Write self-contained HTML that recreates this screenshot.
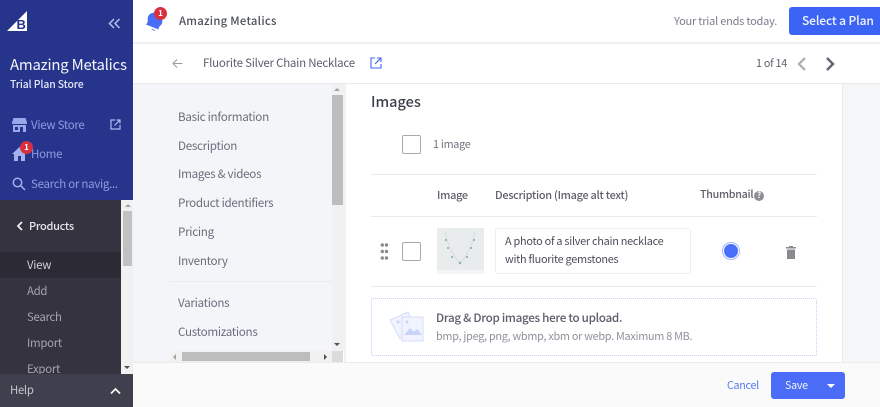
<!DOCTYPE html>
<html><head><meta charset="utf-8"><style>
html,body{margin:0;padding:0;width:880px;height:407px;overflow:hidden;background:#fff}
body{font-family:"Noto Sans CJK SC","Liberation Sans",sans-serif;position:relative}
.a{position:absolute}
.t{position:absolute;white-space:nowrap;line-height:16px;font-size:12px}
.n{letter-spacing:-.025em}
.nav{color:#6b6e7d;font-size:11.650px;left:178px;letter-spacing:-.025em}
.sb{color:#8f9be0;font-size:11.500px;left:31px;letter-spacing:-.025em}
.dk{color:#a6a5ad;font-size:11.400px;left:27px;letter-spacing:-.025em}
</style></head><body>
<!-- left sidebar -->
<div class="a" style="left:0;top:0;width:133px;height:200px;background:#27348b"></div>
<svg class="a" style="left:7px;top:10px" width="22" height="22" viewBox="0 0 22 22"><path d="M0 21L20 1V21Z" fill="#fff"/><text x="9.500" y="19" font-size="13" font-weight="700" fill="#27348b" font-family="Liberation Sans">B</text></svg>
<svg class="a" style="left:108px;top:17px" width="13" height="13" viewBox="0 0 13 13" fill="none" stroke="#b5bdf0" stroke-width="1.500"><path d="M6 2L1.500 6.500L6 11M11.500 2L7 6.500L11.500 11"/></svg>
<div class="t" style="left:10px;top:55px;font-size:14.900px;line-height:20px;color:#f2f3fb;letter-spacing:-.2px">Amazing Metalics</div>
<div class="t" style="left:10px;top:76px;font-size:10.400px;font-weight:500;color:#e3e6f8;letter-spacing:-.12px">Trial Plan Store</div>
<svg class="a" style="left:12px;top:118px" width="15" height="14" viewBox="0 0 15 14" fill="#9ba7ec"><path d="M1.500 0H13.500L15 4.500V6H0V4.500ZM1 7H14V14H11V9H8V14H1ZM3 9V12H6V9Z" fill-rule="evenodd"/></svg>
<div class="t sb" style="top:117px">View Store</div>
<svg class="a" style="left:110px;top:119px" width="11" height="11" viewBox="0 0 11 11" fill="none" stroke="#b0b9ee" stroke-width="1.200"><path d="M5 1H1V10H10V6M6.500 1H10V4.500M10 1L4.500 6.500"/></svg>
<svg class="a" style="left:12px;top:147px" width="15" height="14" viewBox="0 0 15 14" fill="#a5b0ef"><path d="M7.500 0L15 7H13V14H9V9H6V14H2V7H0Z"/></svg>
<div class="a" style="left:20px;top:141px;width:13px;height:13px;border-radius:50%;background:#d9303f;color:#fff;font-size:8px;line-height:13px;text-align:center;font-weight:700">1</div>
<div class="t sb" style="top:146px">Home</div>
<svg class="a" style="left:12px;top:177px" width="14" height="14" viewBox="0 0 14 14" fill="none" stroke="#a5b0ef" stroke-width="1.500"><circle cx="5.500" cy="5.500" r="4.200"/><path d="M8.500 8.500L13 13"/></svg>
<div class="t sb" style="top:176px">Search or navig...</div>
<div class="a" style="left:0;top:200px;width:121px;height:174px;background:#34333f"></div>
<div class="a" style="left:0;top:252px;width:121px;height:26px;background:#2b2a35"></div>
<svg class="a" style="left:16px;top:221px" width="8" height="10" viewBox="0 0 8 10" fill="none" stroke="#eee" stroke-width="1.800"><path d="M6 1L2 5L6 9"/></svg>
<div class="t n" style="left:29px;top:218px;font-size:11px;font-weight:500;color:#e6e6ea">Products</div>
<div class="t dk" style="top:257px;color:#cfcfd4">View</div>
<div class="t dk" style="top:283px">Add</div>
<div class="t dk" style="top:309px">Search</div>
<div class="t dk" style="top:335px">Import</div>
<div class="t dk" style="top:361px">Export</div>
<div class="a" style="left:121px;top:200px;width:12px;height:174px;background:#f1f1f1"></div>
<div class="a" style="left:123px;top:211px;width:9px;height:55px;background:#c1c1c1"></div>
<div class="a" style="left:125px;top:204px;width:0;height:0;border:3px solid transparent;border-top:0;border-bottom:3px solid #a3a3a3"></div>
<div class="a" style="left:124px;top:366px;width:0;height:0;border:3px solid transparent;border-bottom:0;border-top:3px solid #505050"></div>
<div class="a" style="left:0;top:374px;width:133px;height:33px;background:#403f4d"></div>
<div class="t n" style="left:10px;top:382px;font-size:11.300px;color:#c4c4cb">Help</div>
<svg class="a" style="left:110px;top:387px" width="11" height="8" viewBox="0 0 11 8" fill="none" stroke="#f2f2f2" stroke-width="1.800"><path d="M1 6.500L5.500 2L10 6.500"/></svg>
<!-- top bar -->
<div class="a" style="left:133px;top:42px;width:747px;height:2px;background:#efeff1"></div>
<svg class="a" style="left:145px;top:11px" width="20" height="21" viewBox="0 0 20 21" fill="#4a6cf7"><path d="M7 2C3.500 3 2.500 6 2.800 9C3 11 2 12.500 1 13.500L13.500 18.500C13.500 17 14 15.500 15.500 14.500C18 12.500 18 8.500 15.500 5C13.500 2.500 10 1 7 2Z"/><path d="M6.500 17.500A3 3 0 0 0 10.500 19.500Z"/></svg>
<div class="a" style="left:154px;top:7px;width:13px;height:13px;border-radius:50%;background:#d9303f;color:#fff;font-size:8px;line-height:13px;text-align:center;font-weight:700">1</div>
<div class="t" style="left:179px;top:13px;font-size:11.300px;font-weight:500;color:#4c4f5c;letter-spacing:.27px">Amazing Metalics</div>
<div class="t" style="left:674px;top:13px;font-size:11px;color:#7a7d8e;letter-spacing:-.22px">Your trial ends today.</div>
<div class="a" style="left:789px;top:7px;width:100px;height:28px;border-radius:3px;background:#3c64f4"></div>
<div class="t" style="left:802px;top:13px;font-size:12px;font-weight:500;color:#f4f6ff;letter-spacing:-.12px">Select a Plan</div>
<!-- sub header -->
<svg class="a" style="left:172px;top:58px" width="11" height="11" viewBox="0 0 11 11" fill="none" stroke="#9a9ca6" stroke-width="1.100"><path d="M10.500 5.500H1M5 1.500L1 5.500L5 9.500"/></svg>
<div class="t" style="left:203px;top:55px;font-size:11.500px;color:#5c5f6e;letter-spacing:-.24px">Fluorite Silver Chain Necklace</div>
<svg class="a" style="left:370px;top:57px" width="12" height="12" viewBox="0 0 12 12" fill="none" stroke="#3c64f4" stroke-width="1.100"><path d="M5 1H1V11H11V7M7 1H11V5M11 1L5 7"/></svg>
<div class="t n" style="left:756px;top:55px;font-size:10.800px;color:#5e606c">1 of 14</div>
<svg class="a" style="left:796px;top:57px" width="11" height="14" viewBox="0 0 11 14" fill="none" stroke="#b0b1b6" stroke-width="2.400"><path d="M9 1L3 7L9 13"/></svg>
<svg class="a" style="left:825px;top:57px" width="11" height="14" viewBox="0 0 11 14" fill="none" stroke="#63646f" stroke-width="2.400"><path d="M2 1L8 7L2 13"/></svg>
<div class="a" style="left:133px;top:83px;width:747px;height:1px;background:#ebebee"></div>
<!-- left nav -->
<div class="a" style="left:133px;top:84px;width:199px;height:278px;background:#f4f5f8"></div>
<div class="t nav" style="top:109px">Basic information</div>
<div class="t nav" style="top:138px">Description</div>
<div class="t nav" style="top:166px">Images &amp; videos</div>
<div class="t nav" style="top:195px">Product identifiers</div>
<div class="t nav" style="top:224px">Pricing</div>
<div class="t nav" style="top:253px">Inventory</div>
<div class="a" style="left:170px;top:281px;width:162px;height:1px;background:#e9eaee"></div>
<div class="t nav" style="top:295px">Variations</div>
<div class="t nav" style="top:324px">Customizations</div>
<div class="a" style="left:332px;top:84px;width:12px;height:267px;background:#f1f1f1"></div>
<div class="a" style="left:332px;top:95px;width:11px;height:110px;background:#bdbdbd"></div>
<div class="a" style="left:334px;top:88px;width:0;height:0;border:3px solid transparent;border-top:0;border-bottom:3px solid #a3a3a3"></div>
<div class="a" style="left:334px;top:343px;width:0;height:0;border:3px solid transparent;border-bottom:0;border-top:3px solid #505050"></div>
<div class="a" style="left:170px;top:351px;width:162px;height:11px;background:#f1f1f1"></div>
<div class="a" style="left:182px;top:352px;width:128px;height:9px;background:#bdbdbd"></div>
<div class="a" style="left:332px;top:351px;width:11px;height:11px;background:#dcdcdc"></div>
<div class="a" style="left:173px;top:354px;width:0;height:0;border:3px solid transparent;border-left:0;border-right:3px solid #a3a3a3"></div>
<div class="a" style="left:324px;top:354px;width:0;height:0;border:3px solid transparent;border-right:0;border-left:3px solid #505050"></div>
<div class="a" style="left:344px;top:84px;width:2px;height:278px;background:#f1f2f4"></div>
<!-- right bg -->
<div class="a" style="left:842px;top:84px;width:38px;height:278px;background:#f5f6f8;border-left:1px solid #ececef;box-sizing:border-box"></div>
<!-- main -->
<div class="t" style="left:371px;top:92px;font-size:14.500px;line-height:20px;font-weight:500;color:#3c3f4c">Images</div>
<div class="a" style="left:402px;top:135px;width:19px;height:19px;border:1px solid #a8a9ad;border-radius:2px;box-sizing:border-box"></div>
<div class="t n" style="left:433px;top:136px;font-size:10.800px;color:#70727e">1 image</div>
<div class="a" style="left:371px;top:174px;width:446px;height:1px;background:#eaeaec"></div>
<div class="t n" style="left:437px;top:187px;font-size:10.900px;font-weight:500;color:#5e606c">Image</div>
<div class="t n" style="left:495px;top:187px;font-size:10.900px;font-weight:500;color:#5e606c">Description (Image alt text)</div>
<div class="t n" style="left:700px;top:187px;font-size:10.700px;font-weight:500;color:#5e606c">Thumbnail</div>
<div class="a" style="left:754px;top:191px;width:10px;height:10px;border-radius:50%;background:#8e8e94;color:#fff;font-size:8px;line-height:10px;text-align:center;font-weight:700">?</div>
<div class="a" style="left:371px;top:216px;width:446px;height:1px;background:#eaeaec"></div>
<svg class="a" style="left:380px;top:243px" width="9" height="18" fill="#8a8b90"><circle cx="2.300" cy="2" r="1.700"/><circle cx="6.500" cy="2" r="1.700"/><circle cx="2.300" cy="8.500" r="1.700"/><circle cx="6.500" cy="8.500" r="1.700"/><circle cx="2.300" cy="15" r="1.700"/><circle cx="6.500" cy="15" r="1.700"/></svg>
<div class="a" style="left:402px;top:242px;width:19px;height:19px;border:1px solid #a8a9ad;border-radius:2px;box-sizing:border-box"></div>
<svg class="a" style="left:437px;top:228px" width="47" height="46" viewBox="0 0 47 46"><rect width="47" height="46" fill="#e8eced"/><rect y="42" width="47" height="4" fill="#f3f5f5"/><path d="M8 3C10 18 18 30 23 35C28 30 36 18 38 3" fill="none" stroke="#d0d7d7" stroke-width=".7"/><g fill="#86aaa8"><circle cx="9" cy="12" r="1"/><circle cx="37" cy="12" r="1"/><circle cx="11" cy="20" r="1"/><circle cx="34" cy="20" r="1"/><circle cx="15" cy="29" r="1"/><circle cx="30" cy="29" r="1"/><circle cx="23" cy="35" r="1.200"/></g></svg>
<div class="a" style="left:495px;top:228px;width:196px;height:46px;border:1px solid #eeeef0;border-radius:3px;box-sizing:border-box"></div>
<div class="t n" style="left:505px;top:233px;font-size:10.900px;color:#4b4d59">A photo of a silver chain necklace</div>
<div class="t n" style="left:505px;top:251px;font-size:10.900px;color:#4b4d59">with fluorite gemstones</div>
<div class="a" style="left:722px;top:242px;width:18px;height:18px;border-radius:50%;border:1px solid #a4b5fb;box-sizing:border-box"></div>
<div class="a" style="left:724px;top:244px;width:14px;height:14px;border-radius:50%;background:#4a6ffb"></div>
<svg class="a" style="left:786px;top:246px" width="10" height="13" viewBox="0 0 10 13" fill="#8a8a8f"><path d="M3 0H7V1H10V2.500H0V1H3ZM1 3.500H9V13H1Z"/></svg>
<div class="a" style="left:371px;top:286px;width:446px;height:1px;background:#eaeaec"></div>
<div class="a" style="left:371px;top:298px;width:446px;height:58px;border:1px dotted #c3cff6;border-radius:2px;box-sizing:border-box"></div>
<svg class="a" style="left:389px;top:311px" width="36" height="32" viewBox="0 0 36 32"><g fill="#f1f4fe" stroke="#d5ddfb" stroke-width="1"><path d="M1 9L19 1L28 20L11 28Z"/><rect x="13" y="6" width="21" height="24"/></g><path d="M15 24L21 17L25 21L28 18L33 24Z" fill="#c9d4f9"/><circle cx="18" cy="11" r="1.500" fill="#c9d4f9"/><circle cx="9" cy="11" r="1.500" fill="#c9d4f9"/></svg>
<div class="t n" style="left:436px;top:310px;font-size:11.650px;font-weight:500;color:#5b5d69">Drag &amp; Drop images here to upload.</div>
<div class="t n" style="left:436px;top:328px;font-size:10.850px;color:#8f919b">bmp, jpeg, png, wbmp, xbm or webp. Maximum 8 MB.</div>
<!-- footer -->
<div class="a" style="left:133px;top:362px;width:747px;height:45px;background:#fafafa;border-top:1px solid #ebebed;box-sizing:border-box"></div>
<div class="t n" style="left:727px;top:378px;font-size:10.700px;color:#5a78f0">Cancel</div>
<div class="a" style="left:771px;top:372px;width:74px;height:27px;border-radius:3px;background:#4a6cf7"></div>
<div class="t n" style="left:785px;top:378px;font-size:10.700px;color:#f2f4ff">Save</div>
<div class="a" style="left:827px;top:384px;width:0;height:0;border:4px solid transparent;border-bottom:0;border-top:4px solid #fff"></div>
</body></html>
